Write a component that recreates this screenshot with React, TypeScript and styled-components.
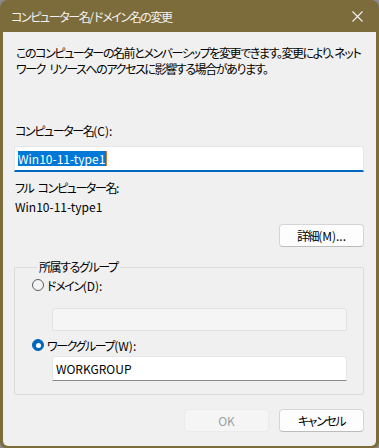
import styled, { createGlobalStyle } from "styled-components";

const GlobalStyle = createGlobalStyle`
  html, body {
    margin: 0;
    padding: 0;
    background: #8a8a8a;
  }
  body {
    font-family: "Noto Sans CJK JP", "Noto Sans", sans-serif;
    font-size: 12px;
    font-feature-settings: "palt";
    letter-spacing: -1.4px;
    word-spacing: 3px;
    color: #000;
  }
`;

const Window = styled.div`
  width: 379px;
  height: 448px;
  box-sizing: border-box;
  display: flex;
  flex-direction: column;
  background: #7d6c3b;
  border: 3px solid #7d6c3b;
  border-top: none;
  border-bottom-width: 2px;
  border-radius: 8px 8px 6px 6px;
  overflow: hidden;
`;

const TitleBar = styled.div`
  height: 32px;
  flex: none;
  display: flex;
  align-items: center;
  justify-content: space-between;
  padding: 0 12px 0 8px;
  color: #f2f2f2;
  font-size: 12px;
`;

const CloseButton = styled.button`
  width: 14px;
  height: 14px;
  padding: 0;
  border: none;
  background: none;
  display: flex;
  align-items: center;
  justify-content: center;
`;

const Client = styled.div`
  flex: 1;
  display: flex;
  flex-direction: column;
  background: #f0f0f0;
  border-radius: 0 0 5px 5px;
  padding: 13px 12px 0 11px;
`;

// Latin runs inside Japanese labels keep their natural spacing
const Latin = styled.span`
  letter-spacing: 0;
`;

const Text = styled.div<{ $top?: number; $latin?: boolean }>`
  line-height: 16px;
  margin-top: ${({ $top }) => $top ?? 0}px;
  padding-left: 1px;
  white-space: nowrap;
  letter-spacing: ${({ $latin }) => ($latin ? "0" : "inherit")};
`;

const Description = styled.p`
  margin: 0;
  line-height: 16px;
  padding-left: 2px;
  white-space: nowrap;
`;

const Field = styled.div<{ $focused?: boolean; $disabled?: boolean; $h: number; $top?: number; $indent?: number }>`
  height: ${({ $h }) => $h}px;
  box-sizing: border-box;
  margin-top: ${({ $top }) => $top ?? 0}px;
  margin-left: ${({ $indent }) => $indent ?? 0}px;
  display: flex;
  align-items: center;
  padding: 0 3px;
  letter-spacing: 0;
  background: ${({ $disabled }) => ($disabled ? "#f5f5f5" : "#ffffff")};
  border: 1px solid ${({ $disabled }) => ($disabled ? "#e2e2e2" : "#e6e6e6")};
  border-bottom: ${({ $focused, $disabled }) =>
    $focused ? "2px solid #0067c0" : $disabled ? "1px solid #e2e2e2" : "1px solid #8a8a8a"};
  border-radius: 3px 3px 0 0;
  line-height: 16px;
`;

const Selected = styled.span`
  background: #0078d7;
  color: #fff;
  line-height: 15px;
  padding: 0 1px 0 0;
  border-right: 1px solid #d07a30;
`;

const Btn = styled.button<{ $disabled?: boolean }>`
  width: 85px;
  height: 23px;
  box-sizing: border-box;
  font: inherit;
  font-feature-settings: "palt";
  letter-spacing: inherit;
  border-radius: 4px;
  padding: 0;
  background: ${({ $disabled }) => ($disabled ? "#f5f5f5" : "#fdfdfd")};
  color: ${({ $disabled }) => ($disabled ? "#a0a0a0" : "#000")};
  border: 1px solid ${({ $disabled }) => ($disabled ? "#ebebeb" : "#d5d5d5")};
  border-bottom-color: ${({ $disabled }) => ($disabled ? "#ebebeb" : "#bcbcbc")};
`;

const RightRow = styled.div<{ $top: number }>`
  display: flex;
  justify-content: flex-end;
  gap: 10px;
  margin-top: ${({ $top }) => $top}px;
`;

const Group = styled.fieldset`
  margin: 12px 0 0 0;
  padding: 2px 16px 13px 17px;
  border: 1px solid #dcdcdc;
  border-radius: 2px;
  min-width: 0;
`;

const Legend = styled.legend`
  padding: 0 2px;
  margin-left: 5px;
  line-height: 16px;
`;

const RadioRow = styled.label<{ $top?: number }>`
  display: flex;
  align-items: center;
  gap: 3px;
  height: 16px;
  margin-top: ${({ $top }) => $top ?? 0}px;
`;

const RadioDot = styled.span<{ $checked?: boolean }>`
  width: 12px;
  height: 12px;
  box-sizing: border-box;
  border-radius: 50%;
  flex: none;
  background: ${({ $checked }) => ($checked ? "#0067c0" : "#f4f4f4")};
  border: 1px solid ${({ $checked }) => ($checked ? "#0067c0" : "#5f5f5f")};
  display: flex;
  align-items: center;
  justify-content: center;
  &::after {
    content: "";
    display: ${({ $checked }) => ($checked ? "block" : "none")};
    width: 5px;
    height: 5px;
    border-radius: 50%;
    background: #fff;
  }
`;

export default function App() {
  return (
    <>
      <GlobalStyle />
      <Window>
        <TitleBar>
          <span>
            コンピューター名<Latin>/</Latin>ドメイン名の変更
          </span>
          <CloseButton aria-label="閉じる">
            <svg width="11" height="11" viewBox="0 0 11 11">
              <path d="M0.5 0.5 L10.5 10.5 M10.5 0.5 L0.5 10.5" stroke="#f2f2f2" strokeWidth="1.1" />
            </svg>
          </CloseButton>
        </TitleBar>
        <Client>
          <Description>
            このコンピューターの名前とメンバーシップを変更できます。変更により、ネット
            <br />
            ワーク リソースへのアクセスに影響する場合があります。
          </Description>
          <Text $top={46}>
            コンピューター名<Latin>(C):</Latin>
          </Text>
          <Field $focused $h={26} $top={7}>
            <Selected>Win10-11-type1</Selected>
          </Field>
          <Text $top={8}>
            フル コンピューター名<Latin>:</Latin>
          </Text>
          <Text $top={3} $latin>
            Win10-11-type1
          </Text>
          <RightRow $top={9}>
            <Btn>
              詳細<Latin>(M)...</Latin>
            </Btn>
          </RightRow>
          <Group>
            <Legend>所属するグループ</Legend>
            <RadioRow>
              <RadioDot />
              <span>
                ドメイン<Latin>(D):</Latin>
              </span>
            </RadioRow>
            <Field $disabled $h={23} $top={15} $indent={20} />
            <RadioRow $top={6}>
              <RadioDot $checked />
              <span>
                ワークグループ<Latin>(W):</Latin>
              </span>
            </RadioRow>
            <Field $h={25} $top={3} $indent={20}>
              WORKGROUP
            </Field>
          </Group>
          <RightRow $top={14}>
            <Btn $disabled>
              <Latin>OK</Latin>
            </Btn>
            <Btn>キャンセル</Btn>
          </RightRow>
        </Client>
      </Window>
    </>
  );
}
